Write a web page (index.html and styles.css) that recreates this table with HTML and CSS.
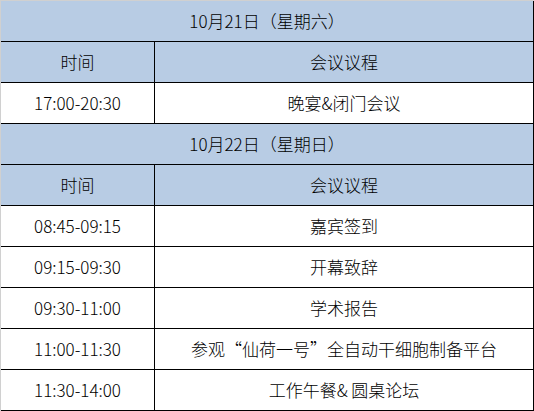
FILE: index.html
```html
<!DOCTYPE html>
<html lang="zh-CN">
<head>
<meta charset="utf-8">
<title>会议议程</title>
<link rel="stylesheet" href="styles.css">
</head>
<body>
<div class="frame">
<table class="agenda">
  <colgroup><col class="c-time"><col class="c-item"></colgroup>
  <tbody>
    <tr class="day"><td colspan="2">10月21日（星期六）</td></tr>
    <tr class="head"><td>时间</td><td>会议议程</td></tr>
    <tr><td>17:00-20:30</td><td>晚宴&amp;闭门会议</td></tr>
    <tr class="day"><td colspan="2">10月22日（星期日）</td></tr>
    <tr class="head"><td>时间</td><td>会议议程</td></tr>
    <tr><td>08:45-09:15</td><td>嘉宾签到</td></tr>
    <tr><td>09:15-09:30</td><td>开幕致辞</td></tr>
    <tr><td>09:30-11:00</td><td>学术报告</td></tr>
    <tr><td>11:00-11:30</td><td>参观“仙荷一号”全自动干细胞制备平台</td></tr>
    <tr><td>11:30-14:00</td><td>工作午餐&amp; 圆桌论坛</td></tr>
  </tbody>
</table>
</div>
</body>
</html>
```

FILE: styles.css
```css
html, body {
  margin: 0;
  padding: 0;
  background: #ffffff;
}
.frame {
  width: 533px;
  border-top: 1px solid #d0d0d0;
  border-left: 1px solid #d0d0d0;
}
.agenda {
  width: 533px;
  table-layout: fixed;
  border-collapse: separate;
  border-spacing: 0;
  font-family: "Noto Sans CJK SC", "Noto Sans", sans-serif;
  font-size: 17px;
  font-weight: 300;
  color: #000;
}
.c-time { width: 154px; }
.c-item { width: 379px; }
.agenda td {
  height: 40px;
  padding: 0;
  text-align: center;
  vertical-align: middle;
  border-right: 1px solid #000;
  border-bottom: 1px solid #000;
  line-height: 20px;
  white-space: nowrap;
}
.day td, .head td {
  background: #b8cce4;
}
```
